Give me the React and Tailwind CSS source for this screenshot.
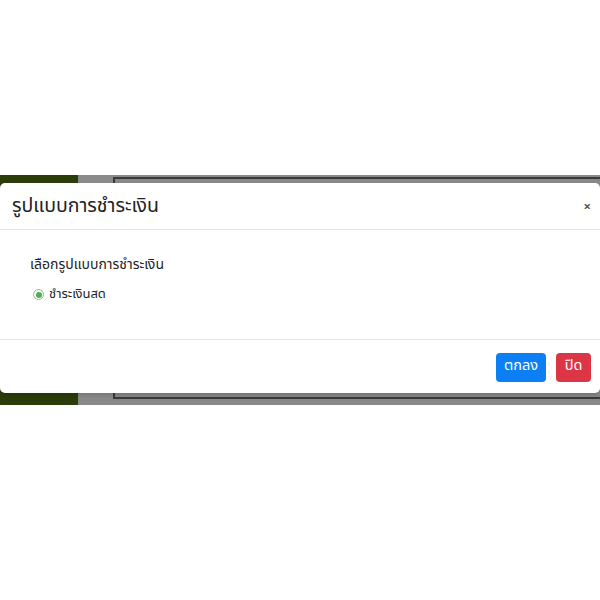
import React from 'react';

function App() {
    return (
        <div className="w-[600px] h-[600px] bg-white relative overflow-hidden" style={{ fontFamily: '"Noto Sans Thai", "Noto Sans", sans-serif' }}>
            {/* page behind the dim overlay */}
            <div className="mt-[175px] h-[230px] flex">
                <div className="w-[78px] bg-[#2c3d0b]" />
                <div className="w-[35px] bg-[#8a8a8a]" />
                <div className="flex-1 bg-[#8a8a8a] pt-[2px] pb-[6px]">
                    <div className="h-full border-2 border-r-0 border-[#3a3a3a] bg-[#888]" />
                </div>
            </div>

            {/* modal */}
            <div className="absolute left-0 top-[183px] w-[600px] h-[210px] bg-white rounded-[5px] shadow-md flex flex-col">
                <div className="h-[47px] flex items-center justify-between pl-[12px] pr-[9px] pt-[2px] border-b border-[#e5e5e5]">
                    <h5 className="text-[19.5px] text-[#222]">รูปแบบการชำระเงิน</h5>
                    <span className="text-[13px] font-bold text-[#555] leading-none">×</span>
                </div>
                <div className="h-[110px] pl-[30px] pt-[25px] border-b border-[#e5e5e5] text-[#222]">
                    <div className="leading-[20px] text-[14px]">เลือกรูปแบบการชำระเงิน</div>
                    <label className="mt-[10px] flex items-center gap-[5px] pl-[3px] text-[13px]">
                        <span className="w-[11px] h-[11px] rounded-full border border-[#8fbf7f] bg-white flex items-center justify-center">
                            <span className="w-[6px] h-[6px] rounded-full bg-[#4caf50]" />
                        </span>
                        <span>ชำระเงินสด</span>
                    </label>
                </div>
                <div className="flex-1 flex items-center justify-end gap-[10px] pr-[9px] pt-[1px]">
                    <button className="h-[29px] w-[50px] rounded-[4px] bg-[#0d7ff5] text-white text-[14.5px]">ตกลง</button>
                    <button className="h-[29px] w-[35px] rounded-[4px] bg-[#dc3545] text-white text-[14.5px]">ปิด</button>
                </div>
            </div>
        </div>
    );
}

export default App;
